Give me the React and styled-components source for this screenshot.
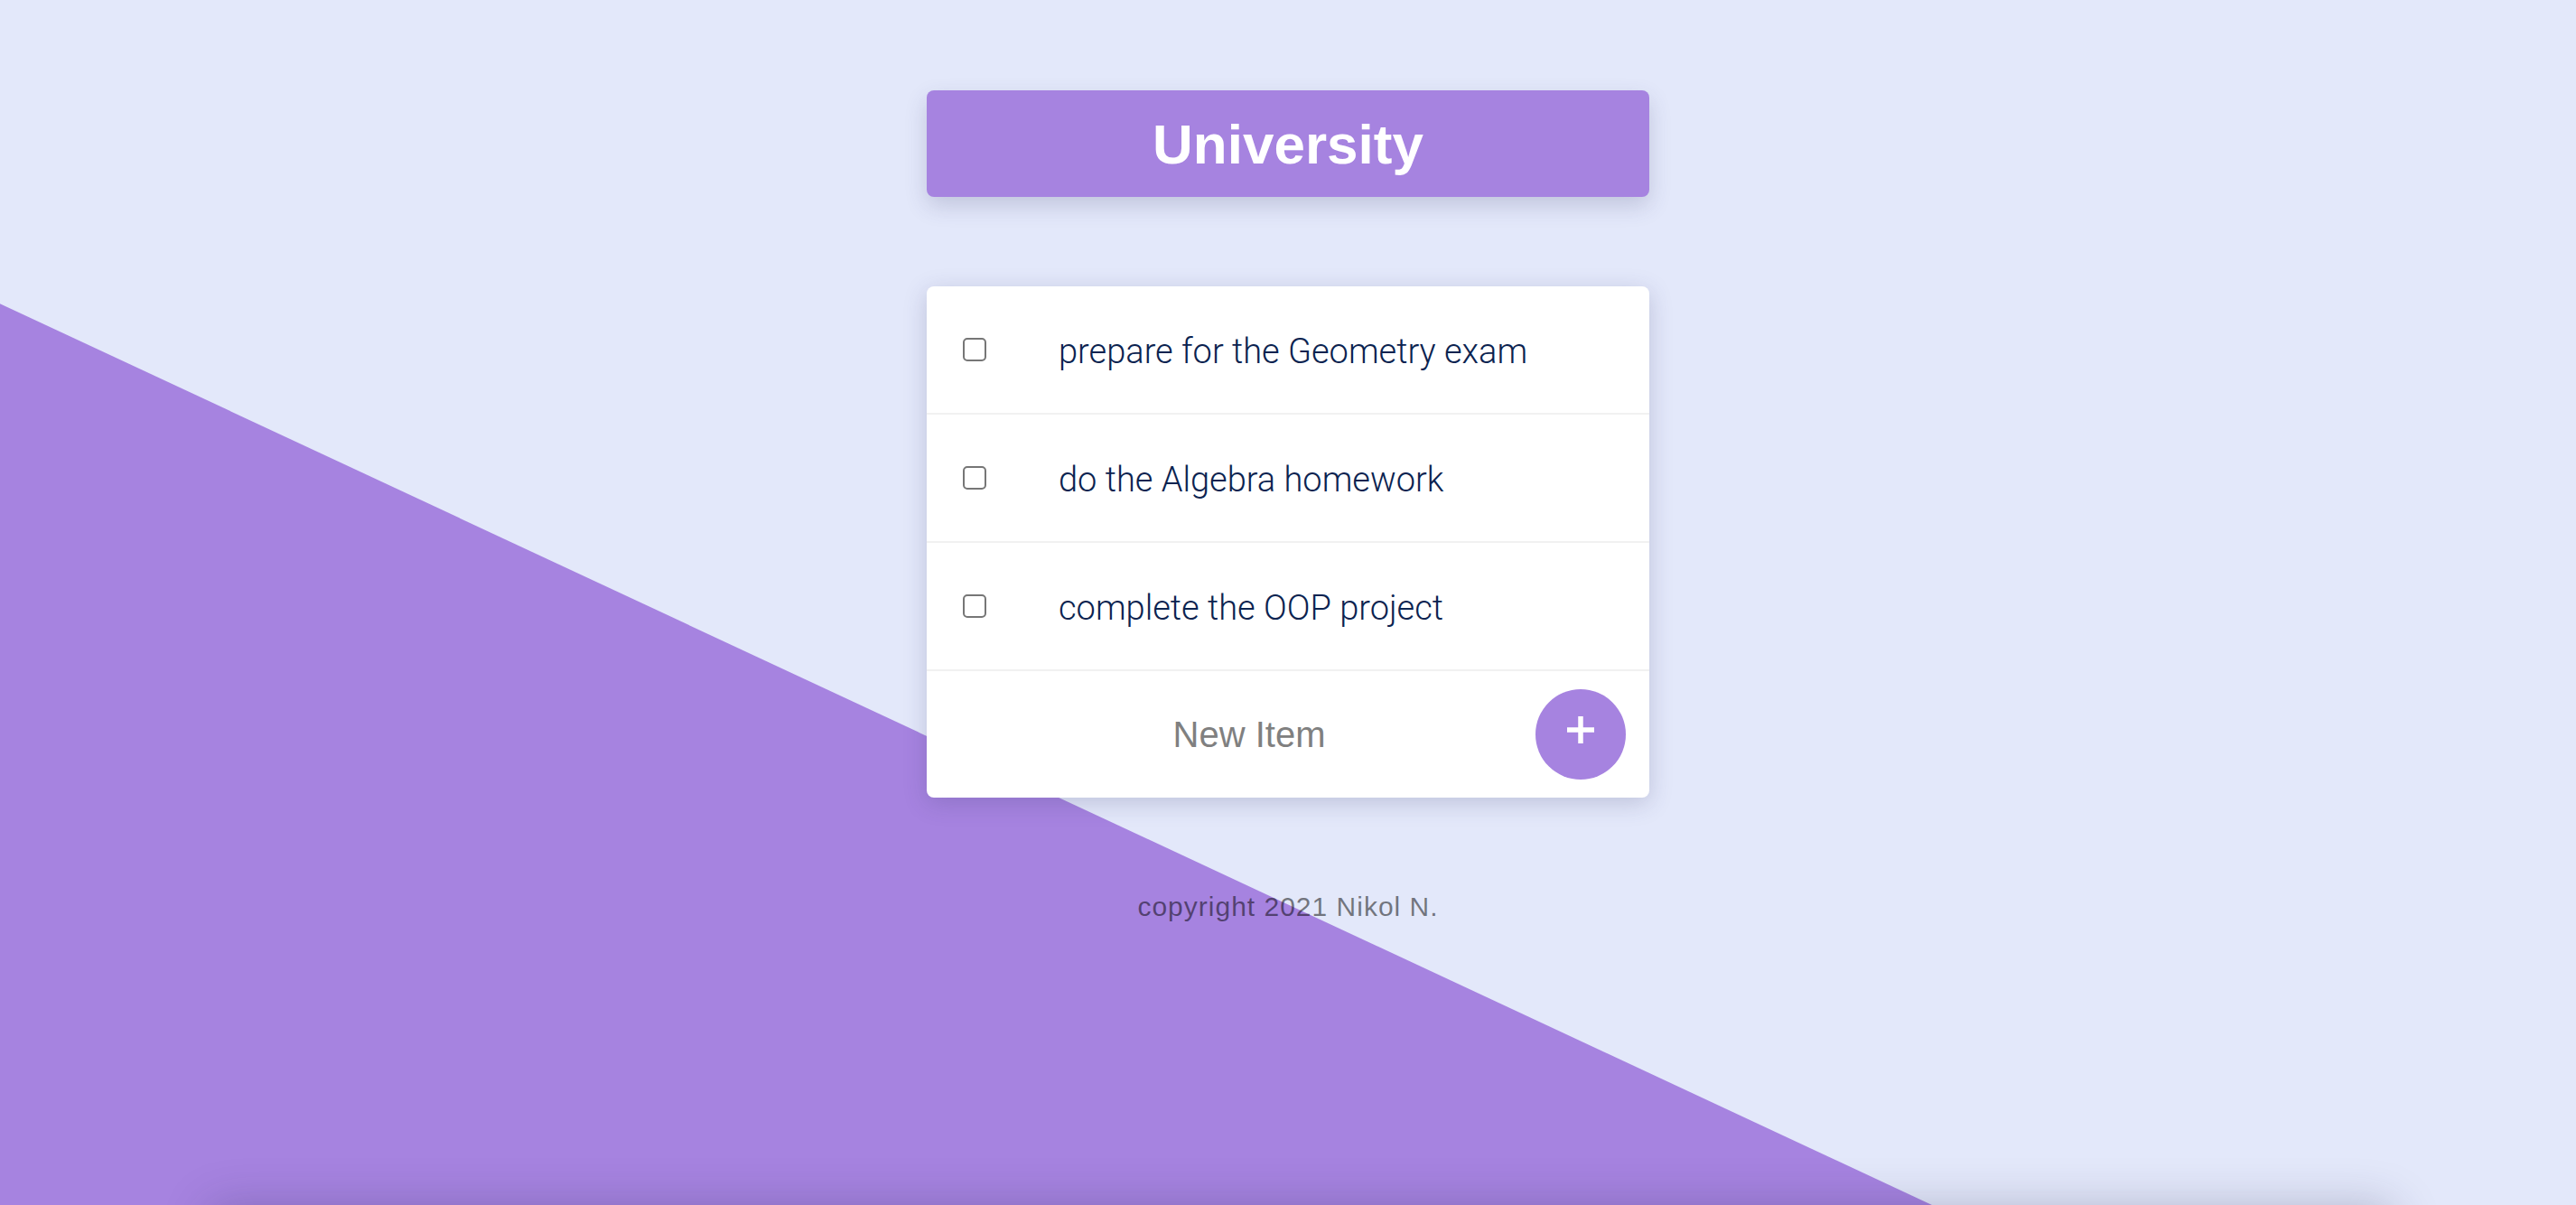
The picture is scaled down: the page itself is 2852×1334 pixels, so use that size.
import { useState } from 'react';
import styled, { createGlobalStyle } from 'styled-components';

const todos = [
  { id: 1, text: 'prepare for the Geometry exam' },
  { id: 2, text: 'do the Algebra homework' },
  { id: 3, text: 'complete the OOP project' },
];

export default function App() {
  const [items, setItems] = useState(todos);
  const [draft, setDraft] = useState('');

  // 새 항목 추가
  const handleAdd = (e) => {
    e.preventDefault();
    if (!draft.trim()) return;
    setItems((prev) => [...prev, { id: Date.now(), text: draft }]);
    setDraft('');
  };

  return (
    <Page>
      <GlobalStyle />
      <Column>
        <Heading>
          <h1>University</h1>
        </Heading>

        <Card>
          {items.map((item) => (
            <TodoRow key={item.id}>
              <Check type="checkbox" />
              <TodoText>{item.text}</TodoText>
            </TodoRow>
          ))}
          <NewItemForm onSubmit={handleAdd}>
            <NewItemInput
              type="text"
              placeholder="New Item"
              value={draft}
              onChange={(e) => setDraft(e.target.value)}
            />
            <AddButton type="submit" aria-label="add">
              <svg width="30" height="30" viewBox="0 0 30 30">
                <rect x="12.25" y="0" width="5.5" height="30" fill="#fff" />
                <rect x="0" y="12.25" width="30" height="5.5" fill="#fff" />
              </svg>
            </AddButton>
          </NewItemForm>
        </Card>

        <Footer>copyright 2021 Nikol N.</Footer>
      </Column>
      <BottomShade />
    </Page>
  );
}

// ---------------- 스타일 ------------------------
const GlobalStyle = createGlobalStyle`
  body {
    margin: 0;
    background: #e3e8fa;
    font-family: "Liberation Sans", Arial, sans-serif;
  }
`;

const Page = styled.div`
  position: relative;
  min-height: 100vh;
  overflow: hidden;
  background: #e3e8fa;

  &::before {
    content: '';
    position: absolute;
    inset: 0;
    background: #a683e0;
    clip-path: polygon(0 25.2%, 75% 100%, 0 100%);
  }
`;

const Column = styled.main`
  position: relative;
  z-index: 1;
  display: flex;
  flex-direction: column;
  align-items: center;
  padding-top: 100px;
`;

const Heading = styled.div`
  display: flex;
  justify-content: center;
  align-items: center;
  width: 800px;
  height: 118px;
  border-radius: 8px;
  background: #a683e0;
  box-shadow: 0 10px 24px rgba(60, 60, 110, 0.2);

  h1 {
    margin: 0;
    color: #fff;
    font-size: 62px;
    font-weight: 700;
  }
`;

const Card = styled.section`
  display: flex;
  flex-direction: column;
  width: 800px;
  margin-top: 99px;
  border-radius: 8px;
  background: #fff;
  box-shadow: 0 6px 26px rgba(60, 60, 110, 0.22);
  overflow: hidden;
`;

const TodoRow = styled.div`
  display: flex;
  align-items: center;
  height: 142px;
  padding-left: 40px;
  border-bottom: 2px solid #f1f1f1;
  box-sizing: border-box;
`;

const Check = styled.input`
  appearance: none;
  width: 26px;
  height: 26px;
  margin: 0 80px 0 0;
  border: 2px solid #767676;
  border-radius: 5px;
  background: #fff;
  box-sizing: border-box;
  cursor: pointer;

  &:checked {
    background: #a683e0;
    border-color: #a683e0;
  }
`;

const TodoText = styled.p`
  margin: 4px 0 0;
  color: #0b2350;
  font-family: Roboto, "Liberation Sans", sans-serif;
  font-weight: 300;
  font-size: 38px;
`;

const NewItemForm = styled.form`
  display: flex;
  align-items: center;
  height: 140px;
  padding: 0 26px 0 40px;
`;

const NewItemInput = styled.input`
  flex: 1;
  min-width: 0;
  border: none;
  outline: none;
  background: transparent;
  text-align: center;
  font-family: "Liberation Sans", Arial, sans-serif;
  font-size: 40px;
  color: #333;

  &::placeholder {
    color: #808080;
  }
`;

const AddButton = styled.button`
  display: flex;
  justify-content: center;
  align-items: center;
  width: 100px;
  height: 100px;
  padding: 0 0 10px;
  border: none;
  border-radius: 50%;
  background: #a683e0;
  cursor: pointer;
`;

const Footer = styled.footer`
  margin-top: 104px;
  color: rgba(0, 0, 0, 0.5);
  font-size: 30px;
  letter-spacing: 1px;
`;

// 화면 아래쪽 그림자
const BottomShade = styled.div`
  position: absolute;
  left: 230px;
  right: 200px;
  bottom: -60px;
  height: 60px;
  border-radius: 20px;
  box-shadow: 0 0 50px rgba(40, 40, 80, 0.25);
`;
